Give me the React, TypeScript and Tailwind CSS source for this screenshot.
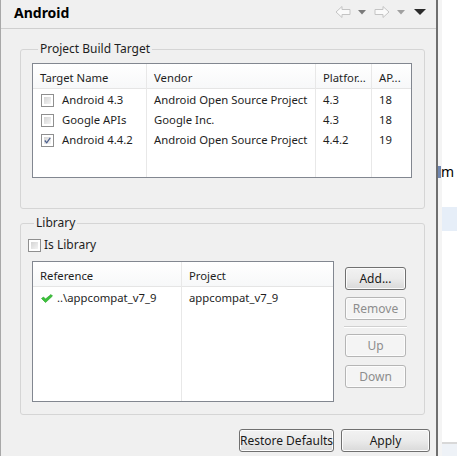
import React from "react"

const targets = [
  { name: "Android 4.3", vendor: "Android Open Source Project", platform: "4.3", api: "18", checked: false },
  { name: "Google APIs", vendor: "Google Inc.", platform: "4.3", api: "18", checked: false },
  { name: "Android 4.4.2", vendor: "Android Open Source Project", platform: "4.4.2", api: "19", checked: true },
]

function Checkbox({ checked = false }: { checked?: boolean }) {
  return (
    <div className="w-[13px] h-[13px] border border-[#8f8f8f] bg-white p-[2px] shrink-0">
      <div className="w-full h-full bg-gradient-to-br from-[#d4d4d4] to-[#f4f4f4] flex items-center justify-center">
        {checked && (
          <svg width="9" height="9" viewBox="0 0 9 9">
            <path d="M1 4.5 L3.5 7.5 L8 1" fill="none" stroke="#4b5e8c" strokeWidth="1.6" />
          </svg>
        )}
      </div>
    </div>
  )
}

function NavArrow({ dir }: { dir: "left" | "right" }) {
  const pts = dir === "left" ? "1,6 7,0.5 7,3.5 15,3.5 15,8.5 7,8.5 7,11.5" : "15,6 9,0.5 9,3.5 1,3.5 1,8.5 9,8.5 9,11.5"
  return (
    <svg width="16" height="12" viewBox="0 0 16 12">
      <polygon points={pts} fill="#fafafa" stroke="#c4c4c4" strokeWidth="1" />
    </svg>
  )
}

function Tri({ color }: { color: string }) {
  return (
    <svg width="8" height="5" viewBox="0 0 8 5">
      <polygon points="0,0 8,0 4,4.5" fill={color} />
    </svg>
  )
}

function Button({ label, disabled = false, className = "" }: { label: string; disabled?: boolean; className?: string }) {
  return (
    <div
      className={
        "h-[23px] rounded-[3px] border flex items-center justify-center whitespace-nowrap text-[12px] shadow-[inset_0_0_0_1px_#fcfcfc] " +
        (disabled
          ? "border-[#b5b5b5] bg-[#f4f4f4] text-[#8d8d8d] "
          : "border-[#707070] bg-gradient-to-b from-[#f2f2f2] via-[#ebebeb] to-[#d9d9d9] text-[#1a1a1a] ") +
        className
      }
    >
      {label}
    </div>
  )
}

function HeaderCell({ label }: { label: string }) {
  return (
    <div className="h-[25px] flex items-center pt-[4px] pl-[7px] border-b border-[#e5e5e5] bg-gradient-to-b from-white to-[#f7f8f9] text-[#1e1e1e] whitespace-nowrap overflow-hidden">
      {label}
    </div>
  )
}

export default function App() {
  return (
    <div className="w-[457px] h-[456px] bg-white flex overflow-hidden font-['Noto_Sans',sans-serif] text-[11.3px] text-[#1e1e1e]">
      <div className="w-[438px] h-full shrink-0 bg-[#f0f0f0] border-l border-[#a8a8a8] border-r-2 border-r-[#6f6f6f] flex flex-col">
        {/* title bar */}
        <div className="h-[29px] shrink-0 border-b border-[#cfcfcf] flex items-center justify-between pl-[13px] pr-[10px] pb-[4px]">
          <span className="text-[14px] font-bold text-black">Android</span>
          <div className="flex items-center">
            <NavArrow dir="left" />
            <div className="ml-[7px]"><Tri color="#7a7a7a" /></div>
            <div className="ml-[8px]"><NavArrow dir="right" /></div>
            <div className="ml-[7px]"><Tri color="#a0a0a0" /></div>
            <div className="ml-[9px]">
              <svg width="12" height="6" viewBox="0 0 12 6">
                <polygon points="0,0 12,0 6,6" fill="#2b2b2b" />
              </svg>
            </div>
          </div>
        </div>

        {/* Project Build Target */}
        <fieldset className="mt-[12px] ml-[19px] w-[405px] border border-[#d5d5d5] rounded-[3px] pl-[11px] pr-[12px] pt-[6px] pb-[30px]">
          <legend className="ml-[6px] px-[2px] leading-[16px] text-[12px]">Project Build Target</legend>
          <div className="h-[115px] border border-[#828790] bg-white flex">
            <div className="w-[114px] border-r border-[#e8e8e8] flex flex-col">
              <HeaderCell label="Target Name" />
              <div className="pt-[1px]">
                {targets.map((t) => (
                  <div key={t.name} className="h-[20px] flex items-center pl-[8px] gap-[8px]">
                    <Checkbox checked={t.checked} />
                    <span>{t.name}</span>
                  </div>
                ))}
              </div>
            </div>
            <div className="w-[169px] border-r border-[#e8e8e8] flex flex-col">
              <HeaderCell label="Vendor" />
              <div className="pt-[1px]">
                {targets.map((t) => (
                  <div key={t.name} className="h-[20px] flex items-center pl-[7px] whitespace-nowrap">{t.vendor}</div>
                ))}
              </div>
            </div>
            <div className="w-[56px] border-r border-[#e8e8e8] flex flex-col">
              <HeaderCell label="Platfor..." />
              <div className="pt-[1px]">
                {targets.map((t) => (
                  <div key={t.name} className="h-[20px] flex items-center pl-[7px]">{t.platform}</div>
                ))}
              </div>
            </div>
            <div className="flex-1 flex flex-col">
              <HeaderCell label="AP..." />
              <div className="pt-[1px]">
                {targets.map((t) => (
                  <div key={t.name} className="h-[20px] flex items-center pl-[7px]">{t.api}</div>
                ))}
              </div>
            </div>
          </div>
        </fieldset>

        {/* Library */}
        <fieldset className="mt-[6px] ml-[19px] w-[405px] border border-[#d5d5d5] rounded-[3px] pl-[7px] pr-[18px] pt-[4px] pb-[12px]">
          <legend className="ml-[6px] px-[2px] leading-[16px] text-[12px]">Library</legend>
          <div className="h-[20px] flex items-center gap-[3px] text-[12px]">
            <Checkbox />
            <span>Is Library</span>
          </div>
          <div className="mt-[6px] ml-[4px] flex gap-[11px]">
            <div className="w-[302px] h-[141px] border border-[#828790] bg-white flex">
              <div className="w-[149px] border-r border-[#e8e8e8] flex flex-col">
                <HeaderCell label="Reference" />
                <div className="pt-[1px] h-[21px] flex items-center pl-[8px] gap-[4px]">
                  <svg width="12" height="9" viewBox="0 0 12 9">
                    <path d="M0.5 4.5 L2.5 3 L4.5 5 L10 0.5 L11.5 2 L4.5 8.5 Z" fill="#3cc23c" stroke="#22a022" strokeWidth="0.6" />
                  </svg>
                  <span>..\appcompat_v7_9</span>
                </div>
              </div>
              <div className="flex-1 flex flex-col">
                <HeaderCell label="Project" />
                <div className="pt-[1px] h-[21px] flex items-center pl-[7px]">appcompat_v7_9</div>
              </div>
            </div>
            <div className="w-[61px] pt-[6px] flex flex-col">
              <Button label="Add..." />
              <Button label="Remove" disabled className="mt-[7px]" />
              <div className="mt-[6px] -mx-[1px] h-[2px] border-t border-[#d0d0d0] border-b border-b-white" />
              <Button label="Up" disabled className="mt-[6px]" />
              <Button label="Down" disabled className="mt-[8px]" />
            </div>
          </div>
        </fieldset>

        <div className="mt-[14px] flex justify-end gap-[7px] pr-[6px]">
          <Button label="Restore Defaults" className="w-[95px]" />
          <Button label="Apply" className="w-[89px]" />
        </div>
      </div>

      {/* neighbouring view, cut off */}
      <div className="flex-1 h-full flex flex-col border-l-[4px] border-[#f4f4f4]">
        <div className="h-[163px]" />
        <div className="h-[18px] flex items-center -ml-[4px]">
          <div className="w-[3px] h-[12px] bg-[#6f86b0]" />
          <span className="text-[14px] text-black leading-none">m</span>
        </div>
        <div className="h-[26px]" />
        <div className="h-[24px] bg-[#e6eef8]" />
        <div className="flex-1" />
        <div className="h-[2px] bg-[#d8d8d8]" />
        <div className="h-[12px] bg-[#eef2f7]" />
      </div>
    </div>
  )
}
